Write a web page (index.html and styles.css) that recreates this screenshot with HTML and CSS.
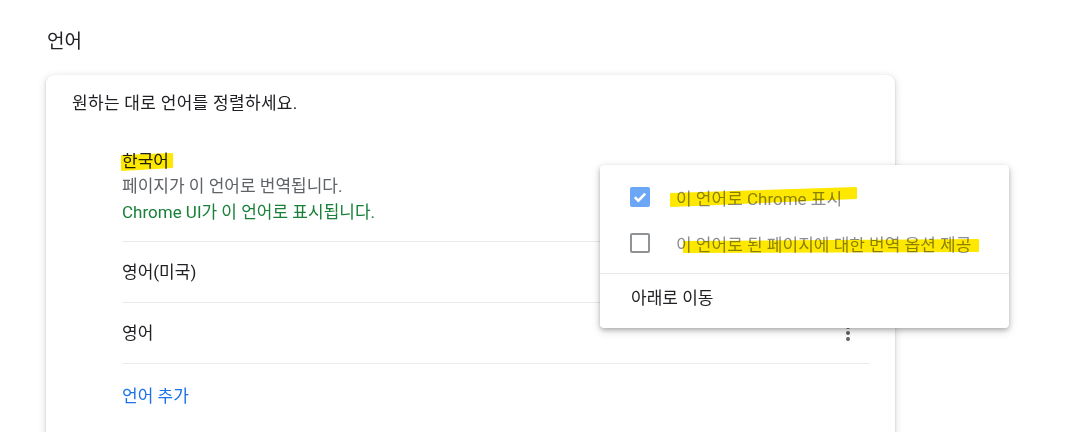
FILE: index.html
```html
<!DOCTYPE html>
<html lang="ko">
<head>
<meta charset="UTF-8">
<meta name="viewport" content="width=device-width, initial-scale=1.0">
<title>언어</title>
<link rel="stylesheet" href="styles.css">
</head>
<body>
<div class="page">
  <h2 class="section-title">언어</h2>

  <div class="card">
    <div class="card-intro">원하는 대로 언어를 정렬하세요.</div>

    <div class="lang-list">
      <!-- first language, with its two status lines -->
      <div class="lang-row lang-row-main">
        <div class="lang-info">
          <span class="lang-name marked">한국어
            <svg class="marker" width="54" height="24" viewBox="0 0 54 24">
              <polygon points="1,7 51,5 51,18 1,21" />
            </svg>
          </span>
          <span class="lang-sub">페이지가 이 언어로 번역됩니다.</span>
          <span class="lang-ui">Chrome UI가 이 언어로 표시됩니다.</span>
        </div>
        <span class="more-btn">
          <svg width="24" height="24" viewBox="0 0 24 24"><circle cx="12" cy="6" r="2"/><circle cx="12" cy="12" r="2"/><circle cx="12" cy="18" r="2"/></svg>
        </span>
      </div>
      <div class="lang-row">
        <span class="lang-name">영어(미국)</span>
        <span class="more-btn">
          <svg width="24" height="24" viewBox="0 0 24 24"><circle cx="12" cy="6" r="2"/><circle cx="12" cy="12" r="2"/><circle cx="12" cy="18" r="2"/></svg>
        </span>
      </div>
      <div class="lang-row">
        <span class="lang-name">영어</span>
        <span class="more-btn">
          <svg width="24" height="24" viewBox="0 0 24 24"><circle cx="12" cy="6" r="2"/><circle cx="12" cy="12" r="2"/><circle cx="12" cy="18" r="2"/></svg>
        </span>
      </div>
      <div class="lang-row">
        <span class="add-link">언어 추가</span>
      </div>
    </div>
  </div>
</div>

<!-- Action menu for the first language -->
<div class="action-menu">
  <svg class="menu-marks" width="409" height="100" viewBox="0 0 409 100">
    <polygon points="71,29 256,23 256,33 71,41" />
    <polygon points="84,77 378,75 378,86 84,87" />
  </svg>
  <div class="menu-item">
    <span class="check check-on">
      <svg width="20" height="20" viewBox="0 0 20 20"><path d="M4.8 10.2 L8.4 13.6 L15.2 6.6" /></svg>
    </span>
    <span class="menu-label">이 언어로 Chrome 표시</span>
  </div>
  <div class="menu-item">
    <span class="check"></span>
    <span class="menu-label">이 언어로 된 페이지에 대한 번역 옵션 제공</span>
  </div>
  <div class="menu-sep"></div>
  <div class="menu-item menu-move">아래로 이동</div>
</div>
</body>
</html>
```

FILE: styles.css
```css
body {
  margin: 0;
  font-family: Roboto, "Noto Sans CJK KR", sans-serif;
  font-size: 17px;
  color: #202124;
  background: #fff;
  overflow: hidden;
}
.page {
  padding: 30px 0 0 46px;
}
.section-title {
  margin: 0 0 21px 1px;
  font-size: 19px;
  font-weight: normal;
  line-height: 24px;
}
/* Card with the language list */
.card {
  width: 849px;
  min-height: 420px;
  background: #fff;
  border-radius: 8px;
  box-shadow: 0 1px 2px rgba(60,64,67,0.3), 0 2px 6px 2px rgba(60,64,67,0.12);
}
.card-intro {
  padding: 16px 0 0 26px;
  line-height: 24px;
  letter-spacing: 0.3px;
}
.lang-list {
  margin: 18px 25px 0 76px;
}
.lang-row {
  display: flex;
  align-items: center;
  justify-content: space-between;
  min-height: 60px;
  border-top: 1px solid #ebebeb;
}
.lang-row-main {
  border-top: none;
  padding: 16px 0 16px;
}
.lang-info {
  display: flex;
  flex-direction: column;
  line-height: 25.5px;
}
.lang-name {
  line-height: 24px;
}
.lang-row-main .lang-name {
  line-height: 25px;
}
.lang-sub {
  color: #5f6368;
}
.lang-ui {
  color: #188038;
}
.add-link {
  color: #1a73e8;
}
.more-btn {
  display: flex;
  margin-right: 10px;
}
.more-btn svg {
  fill: #5f6368;
}
/* highlighter strokes */
.marked {
  position: relative;
  align-self: flex-start;
}
.marker {
  position: absolute;
  left: -1px;
  top: 0;
  mix-blend-mode: multiply;
}
.marker polygon,
.menu-marks polygon {
  fill: #ffe800;
  stroke: #ffe800;
  stroke-width: 2;
  stroke-linejoin: round;
}
/* Action menu */
.action-menu {
  position: absolute;
  left: 600px;
  top: 165px;
  width: 409px;
  padding: 9px 0 10px;
  background: #fff;
  border-radius: 4px;
  box-shadow: 0 2px 4px rgba(0,0,0,0.2), 0 3px 10px rgba(0,0,0,0.18);
}
.menu-marks {
  position: absolute;
  left: 0;
  top: 0;
  mix-blend-mode: multiply;
  z-index: 2;
}
.menu-item {
  display: flex;
  align-items: center;
  height: 46px;
  padding-left: 30px;
}
.check {
  box-sizing: border-box;
  width: 20px;
  height: 20px;
  border: 2px solid #909396;
  border-radius: 2px;
  margin-right: 26px;
}
.check-on {
  border: none;
  background: #6ca6f6;
  display: flex;
  align-items: center;
  justify-content: center;
}
.check-on path {
  fill: none;
  stroke: #fff;
  stroke-width: 2.6;
}
.menu-label {
  color: #8a8d91;
}
.menu-sep {
  margin-top: 7px;
  border-top: 1px solid #e8e8e8;
}
.menu-move {
  height: 44px;
  padding-left: 31px;
}
```
